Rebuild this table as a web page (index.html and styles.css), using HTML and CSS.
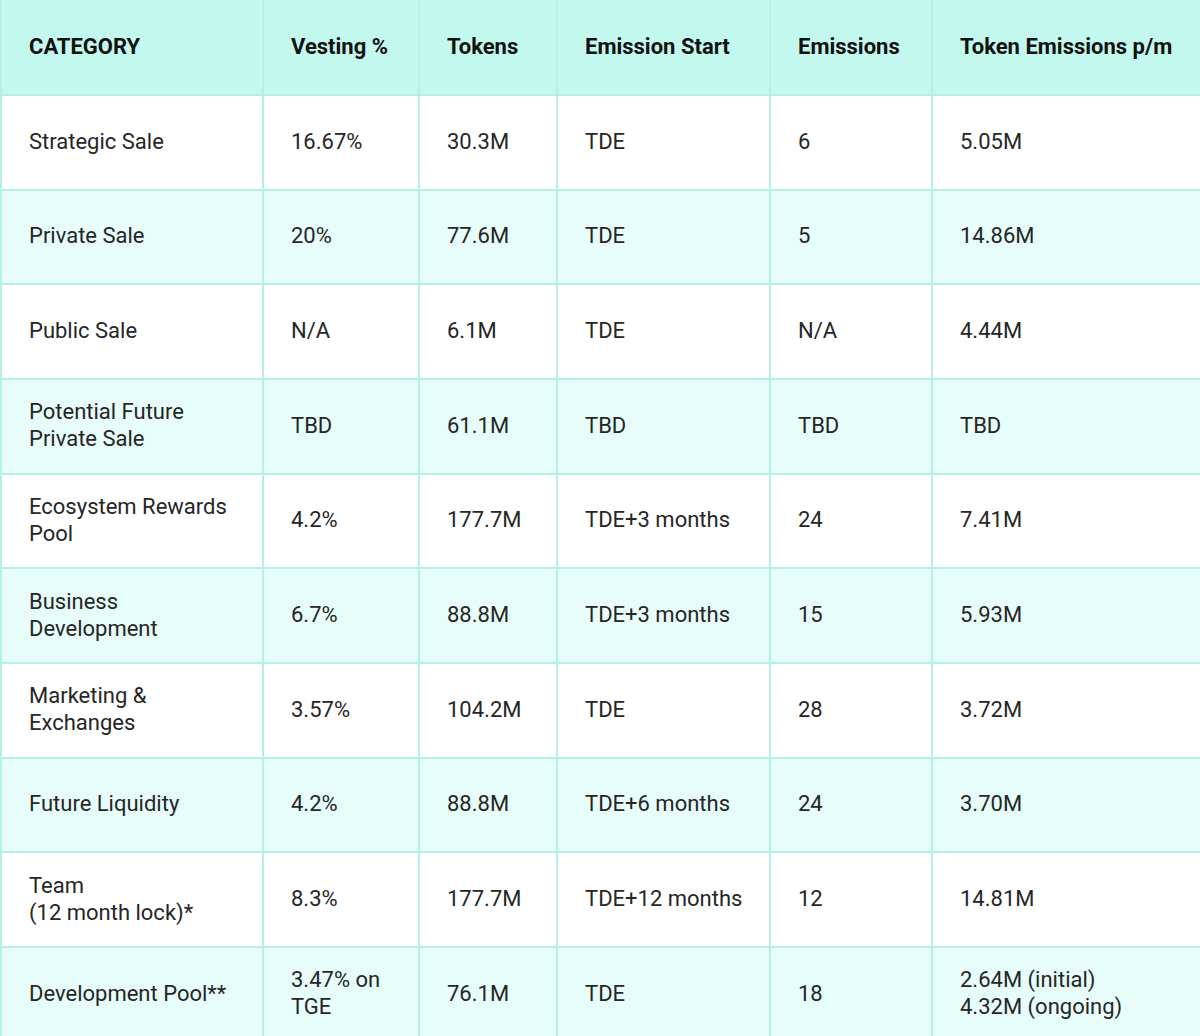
FILE: index.html
```html
<!DOCTYPE html>
<html>
<head>
<meta charset="utf-8">
<link rel="stylesheet" href="styles.css">
</head>
<body>
<div class="table">
  <div class="cell head">CATEGORY</div>
  <div class="cell head">Vesting %</div>
  <div class="cell head">Tokens</div>
  <div class="cell head">Emission Start</div>
  <div class="cell head">Emissions</div>
  <div class="cell head">Token Emissions p/m</div>

  <div class="cell">Strategic Sale</div>
  <div class="cell">16.67%</div>
  <div class="cell">30.3M</div>
  <div class="cell">TDE</div>
  <div class="cell">6</div>
  <div class="cell">5.05M</div>

  <div class="cell alt">Private Sale</div>
  <div class="cell alt">20%</div>
  <div class="cell alt">77.6M</div>
  <div class="cell alt">TDE</div>
  <div class="cell alt">5</div>
  <div class="cell alt">14.86M</div>

  <div class="cell">Public Sale</div>
  <div class="cell">N/A</div>
  <div class="cell">6.1M</div>
  <div class="cell">TDE</div>
  <div class="cell">N/A</div>
  <div class="cell">4.44M</div>

  <div class="cell alt">Potential Future<br>Private Sale</div>
  <div class="cell alt">TBD</div>
  <div class="cell alt">61.1M</div>
  <div class="cell alt">TBD</div>
  <div class="cell alt">TBD</div>
  <div class="cell alt">TBD</div>

  <div class="cell">Ecosystem Rewards<br>Pool</div>
  <div class="cell">4.2%</div>
  <div class="cell">177.7M</div>
  <div class="cell">TDE+3 months</div>
  <div class="cell">24</div>
  <div class="cell">7.41M</div>

  <div class="cell alt">Business<br>Development</div>
  <div class="cell alt">6.7%</div>
  <div class="cell alt">88.8M</div>
  <div class="cell alt">TDE+3 months</div>
  <div class="cell alt">15</div>
  <div class="cell alt">5.93M</div>

  <div class="cell">Marketing &amp;<br>Exchanges</div>
  <div class="cell">3.57%</div>
  <div class="cell">104.2M</div>
  <div class="cell">TDE</div>
  <div class="cell">28</div>
  <div class="cell">3.72M</div>

  <div class="cell alt">Future Liquidity</div>
  <div class="cell alt">4.2%</div>
  <div class="cell alt">88.8M</div>
  <div class="cell alt">TDE+6 months</div>
  <div class="cell alt">24</div>
  <div class="cell alt">3.70M</div>

  <div class="cell">Team<br>(12 month lock)*</div>
  <div class="cell">8.3%</div>
  <div class="cell">177.7M</div>
  <div class="cell">TDE+12 months</div>
  <div class="cell">12</div>
  <div class="cell">14.81M</div>

  <div class="cell alt">Development Pool**</div>
  <div class="cell alt">3.47% on<br>TGE</div>
  <div class="cell alt">76.1M</div>
  <div class="cell alt">TDE</div>
  <div class="cell alt">18</div>
  <div class="cell alt">2.64M (initial)<br>4.32M (ongoing)</div>
</div>
</body>
</html>
```

FILE: styles.css
```css
html, body {
  margin: 0;
  padding: 0;
  background: #ffffff;
  overflow: hidden;
}
body {
  font-family: Roboto, "Liberation Sans", Arial, sans-serif;
}
.table {
  width: 1210px;
  display: grid;
  grid-template-columns: 260px 154px 136px 211px 160px 1fr;
  grid-template-rows: 94px;
  grid-auto-rows: 92.67px;
  column-gap: 2px;
  row-gap: 2px;
  padding-left: 2px;
  background: #b4f1e4;
}
.cell {
  display: flex;
  align-items: center;
  padding-left: 27px;
  padding-bottom: 2px;
  font-size: 22px;
  line-height: 27px;
  color: #262626;
  background: #ffffff;
}
.cell.alt {
  background: #e6fdf9;
}
.cell.head {
  background: #c2f8ee;
  font-weight: 700;
  color: #121212;
}
```
